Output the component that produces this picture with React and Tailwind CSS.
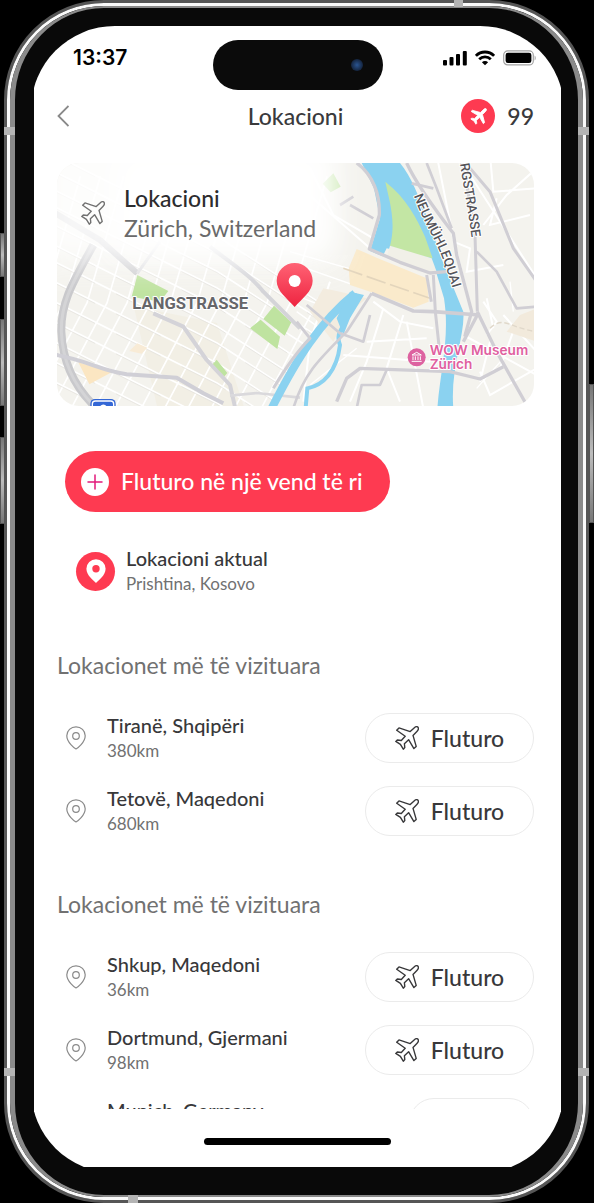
import { Plus } from 'lucide-react';

const visited = [
  { name: 'Tiranë, Shqipëri', distance: '380km' },
  { name: 'Tetovë, Maqedoni', distance: '680km' },
];

const nearby = [
  { name: 'Shkup, Maqedoni', distance: '36km' },
  { name: 'Dortmund, Gjermani', distance: '98km' },
  { name: 'Munich, Germany', compact: true },
];

function PlaneIcon({ className }) {
  return (
    <svg className={className} viewBox="0 0 24 24" fill="none" stroke="currentColor" strokeWidth="1.4" strokeLinejoin="round" aria-hidden="true">
      <path d="M22.9 1.1c-1-.8-2.7-.2-3.8.8L15.2 5.600 4 1.900 1.700 4.300l8.500 6-3.900 4.200-4-.5L.8 15.400l4.600 2.900 2.900 4.900 1.500-1.600-.4-3.900 4.200-4 5.300 8.900 2.300-2.200L18 9.400l3.900-3.900c1.100-1.100 1.900-3.200 1-4.400z" />
    </svg>
  );
}

function PlaneSolidIcon({ className }) {
  return (
    <svg className={className} viewBox="0 0 24 24" fill="currentColor" stroke="currentColor" strokeWidth="1.2" strokeLinejoin="round" aria-hidden="true">
      <path d="M22.800 1.200c-.9-.8-2.300-.4-3.300.6L14.800 6.400 3.200 3.200 1.600 4.800l9.300 5.600-4.500 4.600-4-.7L1.100 15.600l4.500 2.700 2.700 4.600 1.300-1.300-.6-4 4.600-4.500 5.300 9.100 1.700-1.600-3-11.400 4.600-4.600c1-1 1.500-2.500.6-3.400z" />
    </svg>
  );
}

function PinIcon({ className }) {
  return (
    <svg className={className} viewBox="0 0 20 24" fill="none" stroke="currentColor" strokeWidth="1.2" strokeLinejoin="round" aria-hidden="true">
      <path d="M10 23C8.600 22.300.8 16.500.8 9.800a9.200 9 0 0 1 18.400 0C19.200 16.500 11.400 22.300 10 23z" />
      <circle cx="10" cy="10" r="3.300" />
    </svg>
  );
}

function StatusIcons() {
  return (
    <div className="flex items-center gap-2">
      <svg className="h-4 w-6" viewBox="0 0 24 16" aria-hidden="true">
        <rect x="0" y="10" width="4" height="5.500" rx="1" />
        <rect x="6.500" y="7" width="4" height="8.500" rx="1" />
        <rect x="13" y="4" width="4" height="11.500" rx="1" />
        <rect x="19.800" y="1" width="4" height="14.500" rx="1" />
      </svg>
      <svg className="h-4 w-5" viewBox="0 0 20 16" fill="none" stroke="#000" strokeWidth="2.800" aria-hidden="true">
        <path d="M.9 5.800a12.800 12.800 0 0 1 18.200 0" />
        <path d="M4.200 9.300a8.200 8.200 0 0 1 11.600 0" />
        <path d="M6.900 12.200a4.400 4.400 0 0 1 6.200 0L10 15.300z" fill="#000" stroke="none" />
      </svg>
      <svg className="h-4 w-[33px]" viewBox="0 0 33 16" aria-hidden="true">
        <rect x=".7" y=".9" width="29.600" height="14" rx="4" fill="none" stroke="#a3a3a3" strokeWidth="1.200" />
        <rect x="2.600" y="2.800" width="25.800" height="10.200" rx="2.300" />
        <path d="M31.600 5.500c1.500.7 1.500 4.200 0 4.900z" fill="#a3a3a3" />
      </svg>
    </div>
  );
}

const westGridA = [60, 110, 165, 215, 270, 330, 380, 440, 500, 560, 620, 680, 740, 800];
const westGridB = [-60, 0, 70, 130, 190, 260, 320, 400, 470, 540, 610, 680, 760, 830, 900];

function CityMap() {
  return (
    <svg className="block h-full w-full" viewBox="0 0 1431 729" preserveAspectRatio="xMidYMid slice" role="img" aria-label="Zürich">
      <defs>
        <linearGradient id="pinFill" x1="0" y1="0" x2="0" y2="1">
          <stop offset="0" stopColor="#ff6274" />
          <stop offset="1" stopColor="#ee2440" />
        </linearGradient>
        <filter id="haze" x="-30%" y="-60%" width="160%" height="220%">
          <feGaussianBlur stdDeviation="48" />
        </filter>
        <clipPath id="west">
          <path d="M0 0H900L760 330 800 460 640 729H0z" />
        </clipPath>
      </defs>
      <rect width="1431" height="729" fill="#f4f3ee" />

      {/* west side: blocks, side streets, parks */}
      <g clipPath="url(#west)">
        <path d="M230 430 480 480 560 729H300z" fill="#f2efe5" />
        <g fill="none" stroke="#fff" strokeWidth="5">
          {westGridA.map((y) => (
            <path key={y} d={`M-20 ${y - 90}L480 ${y + 160} 960 ${y + 470}`} />
          ))}
          {westGridB.map((x) => (
            <path key={x} d={`M${x + 130} 40L${x + 20} 420 ${x - 160} 760`} />
          ))}
        </g>
        <g fill="none" stroke="#e3e1dd" strokeWidth="2">
          {westGridA.map((y) => (
            <path key={y} d={`M-20 ${y - 86}L480 ${y + 164} 960 ${y + 474}`} strokeDasharray="150 70" />
          ))}
        </g>
      </g>
      <g transform="translate(-21 -24)">
        <path d="M262 360 355 408 330 440 245 425z" fill="#bfe3a0" />
        <path d="M672 452 724 502 704 542 640 492zM632 494 690 545 682 582 600 520z" fill="#bfe3a0" />
        <path d="M500 614 532 654 518 670 484 632z" fill="#bfe3a0" />
        <path d="M85 622 185 652 118 688z" fill="#fbe6c2" />
        <path d="M262 565 292 578 275 596 238 588z" fill="#f8ebd6" />
        <g fill="none" strokeLinejoin="round">
          <path d="M130 270C70 380 32 440 34 530 38 630 80 700 130 750" stroke="#c9c9cc" strokeWidth="24" />
          <path d="M130 270C70 380 32 440 34 530 38 630 80 700 130 750" stroke="#d4d4d6" strokeWidth="9" />
          <path d="M0 165 150 255 262 355" stroke="#cdcdd0" strokeWidth="18" />
          <path d="M480 275C550 330 600 360 640 410L750 520" stroke="#d4d4d8" strokeWidth="12" />
          <path d="M310 475 400 515 470 615 540 690 556 760" stroke="#d4d3d8" strokeWidth="12" />
          <path d="M20 600C120 620 150 645 230 658L380 668 460 715 520 745" stroke="#d0cfd6" strokeWidth="12" />
          <path d="M540 722 620 714 750 728" stroke="#dad9dc" strokeWidth="8" />
          <path d="M330 260 262 355" stroke="#dedee0" strokeWidth="9" />
        </g>
      </g>

      {/* east side: river, canal, station and main roads */}
      <g transform="translate(699 -24)">
        <g fill="none" stroke="#fff" strokeWidth="6">
          <path d="M0 70 240 280M60 40 130 180 250 250M440 0 490 250 545 470M600 0 610 110 740 100M540 60 740 370M580 210 650 120 740 40M620 130 600 210 720 180" />
          <path d="M120 380 60 560 40 740M250 440 330 500 430 520M230 560 410 550M280 460 230 620 180 740M340 480 290 640 330 740M160 600 420 620M350 500 400 760M520 540 740 660M570 650 600 720 740 640M490 260 540 280 530 350 640 330M590 430 610 520M600 560 570 680 M680 500 630 640M580 440 620 500 590 540M640 480 740 590" />
          <path d="M20 330 220 400M0 290 210 350M40 430 140 470M20 470 90 520M60 690 200 580M660 380 670 470M560 700 640 610" strokeWidth="4" />
        </g>
        <path d="M150 410 230 430 170 480 130 560 60 470 100 400z" fill="#f3ecdf" />
        <path d="M690 480 740 460V560L650 530z" fill="#f2eadc" />
        <path d="M130 55 152 95 122 112 98 86z" fill="#bfe3a0" />
        <path d="M215 24H330C365 65 385 125 420 205L450 300 520 470C526 540 480 640 490 760H442C452 640 480 545 462 430L438 350 420 310 290 280 278 304 240 288 270 190 252 100z" fill="#8bd2f0" />
        <path d="M286 80C350 130 380 190 405 245L428 310C380 300 330 285 300 272 320 200 296 130 286 80z" fill="#c3e6a4" />
        <path d="M300 272 425 310 440 350 385 350 290 304z" fill="#f1f0e8" />
        <path d="M200 282 260 308 410 370 416 440 370 458 245 412 180 390 176 340z" fill="#faeacb" />
        <path d="M160 340 420 430" stroke="#e3d5bc" strokeWidth="5" strokeDasharray="60 14" />
        <path d="M195 415C90 500 20 610-60 770" stroke="#8bd2f0" strokeWidth="24" fill="none" />
        <path d="M195 415C180 520 130 520 150 570 140 650 100 690 52 700L46 770" stroke="#8bd2f0" strokeWidth="12" fill="none" />
        <path d="M180 410 222 420 180 490 160 540 140 490z" fill="#8bd2f0" />
        <g fill="none" stroke="#d0ced4" strokeWidth="11" strokeLinejoin="round">
          <path d="M200 24C250 60 270 120 268 180L238 282 330 322 420 354 470 350" strokeWidth="10" />
          <path d="M350 24C380 90 440 170 490 235L500 300 545 470 524 545" strokeWidth="10" />
          <path d="M410 24 440 100 485 220" strokeWidth="8" />
          <path d="M365 85 430 100" strokeWidth="8" />
          <path d="M245 415 370 468 430 470 570 480" />
          <path d="M430 360 436 470 450 600M410 360 424 440" strokeWidth="9" />
          <path d="M520 24 555 240 562 470" strokeWidth="9" />
          <path d="M540 40 600 110 670 280 740 380" strokeWidth="9" />
          <path d="M560 290 620 350 680 460 740 455" strokeWidth="8" />
          <path d="M562 470 620 590 710 750M562 480 520 560" strokeWidth="10" />
          <path d="M50 450 150 535 220 560 240 480" strokeWidth="8" />
          <path d="M245 415 170 530C80 620 40 660 10 760" strokeWidth="8" />
          <path d="M20 500 60 550C20 590-20 650-50 700" strokeWidth="9" />
          <path d="M140 740 170 670 210 640 480 650 570 672 640 635" strokeWidth="10" />
          <path d="M200 760 215 690 270 690 290 645" strokeWidth="8" />
          <path d="M180 150 250 190M150 150 190 125" strokeWidth="8" />
        </g>
        <path d="M600 520C640 480 660 520 740 530" fill="none" stroke="#e0d8ca" strokeWidth="4" strokeDasharray="16 8" />
      </g>

      {/* fade that keeps the card caption readable */}
      <rect x="-60" y="-90" width="900" height="385" fill="#fff" opacity=".82" filter="url(#haze)" />
      <rect x="170" y="-40" width="640" height="310" fill="#fff" opacity=".9" filter="url(#haze)" />

      <g fontWeight="700" stroke="#fff" strokeWidth="6" strokeLinejoin="round" paintOrder="stroke">
        <text x="226" y="438" fontSize="50" fill="#66666a" fontFamily="Roboto, sans-serif">
          LANGSTRASSE
        </text>
        <g fontFamily="Roboto, sans-serif" fill="#55555a" fontSize="40" fontWeight="500">
          <path id="quayLine" d="M1070 98C1095 170 1130 220 1150 270S1180 350 1205 440" fill="none" stroke="none" />
          <text>
            <textPath href="#quayLine">NEUMÜHLEQUAI</textPath>
          </text>
          <path id="bergLine" d="M1206-20C1218 70 1236 150 1254 300" fill="none" stroke="none" />
          <text>
            <textPath href="#bergLine">ERGSTRASSE</textPath>
          </text>
        </g>
        <g fontFamily="Inter, sans-serif" fill="#e0609f" fontSize="41" fontWeight="600">
          <text x="1118" y="577">WOW Museum</text>
          <text x="1118" y="619">Zürich</text>
        </g>
      </g>
      <g transform="translate(1079 583)">
        <circle r="27" fill="#dd62a0" />
        <path d="M-14-7 0-15 14-7zM-11-3V8M-4-3V8M4-3V8M11-3V8M-15 12H15" fill="none" stroke="#fff" strokeWidth="3" />
      </g>
      <g>
        <rect x="100" y="708" width="76" height="60" rx="14" fill="#3467d6" />
        <rect x="106" y="714" width="64" height="50" rx="9" fill="none" stroke="#fff" strokeWidth="4" />
        <path d="M130 729a10 8 0 0 1 18 0z" fill="#fff" />
      </g>
      <g>
        <path d="M713 432C690 405 659 385 659 353a54 53 0 0 1 108 0C767 385 736 405 713 432z" fill="url(#pinFill)" />
        <circle cx="713" cy="354" r="18" fill="#fff" />
      </g>
    </svg>
  );
}

function LocationRow({ place }) {
  return (
    <li className="flex h-[50px] items-center">
      <PinIcon className="ml-[9px] h-6 w-5 shrink-0 text-[#8a8a8a]" />
      <div className="ml-[21px] h-[52px] min-w-0 flex-1">
        <p className="text-xl leading-[26px] font-medium text-[#38383a]">{place.name}</p>
        {place.distance && <p className="text-[17px] leading-[26px] text-[#717171]">{place.distance}</p>}
      </div>
      {place.compact ? (
        <button type="button" aria-label="Fluturo" className="h-[50px] w-[125px] shrink-0 rounded-full border border-[#ebebeb] bg-white" />
      ) : (
        <button
          type="button"
          className="flex h-[50px] w-[169px] shrink-0 items-center justify-center gap-3 rounded-full border border-[#ebebeb] bg-white text-[23px] font-medium text-[#38383a]"
        >
          <PlaneIcon className="h-6 w-6" />
          Fluturo
        </button>
      )}
    </li>
  );
}

function LocationSection({ title, places }) {
  return (
    <section>
      <h2 className="text-[23px] leading-7 text-[#717171]">{title}</h2>
      <ul className="mt-[34px] flex flex-col gap-[23px]">
        {places.map((place) => (
          <LocationRow key={place.name} place={place} />
        ))}
      </ul>
    </section>
  );
}

const sideButton = 'absolute bg-linear-to-b from-[#777] via-[#bdbdbd] to-[#777] border border-[#555]';
const antenna = 'absolute bg-[#b4b4b4]';

function PhoneFrame({ children }) {
  return (
    <div className="relative h-screen overflow-hidden bg-black pr-[5px] pl-1">
      <span className={`${sideButton} top-[233px] left-0 h-11 w-[5px]`} />
      <span className={`${sideButton} top-[319px] left-0 h-[87px] w-[5px]`} />
      <span className={`${sideButton} top-[437px] left-0 h-[87px] w-[5px]`} />
      <span className={`${sideButton} top-[384px] right-0 h-[139px] w-[5px]`} />
      <div className="h-full rounded-[100px] border-[3px] border-[#565656]">
        <div className="h-full rounded-[97px] border-[3px] border-[#fafafa]">
          <div className="h-full rounded-[94px] border-x-[5px] border-y-2 border-[#8a8a8a] bg-[#090909] pt-[18px] pr-[17px] pb-7 pl-[19px]">
            <div className="h-full overflow-hidden">
              {/* the glass is a little larger than the visible area */}
              <div className="-mx-[3px] -mb-1.5 h-[calc(100%+6px)] overflow-hidden rounded-[84px] bg-white px-[3px]">
                {children}
              </div>
            </div>
          </div>
        </div>
      </div>
      <span className={`${antenna} top-[127px] left-1 h-2 w-[11px]`} />
      <span className={`${antenna} top-[127px] right-[5px] h-2 w-[11px]`} />
      <span className={`${antenna} bottom-[127px] left-1 h-2 w-[11px]`} />
      <span className={`${antenna} right-[5px] bottom-[127px] h-2 w-[11px]`} />
      <span className={`${antenna} top-0 right-[131px] h-[7px] w-[9px]`} />
      <span className={`${antenna} bottom-0 left-32 h-2 w-[10px]`} />
    </div>
  );
}

export default function App() {
  return (
    <PhoneFrame>
      <div className="flex h-full flex-col font-['Lato',sans-serif]">
        <div className="grid h-16 shrink-0 grid-cols-[1fr_170px_1fr] items-center">
          <span className="pl-[39px] font-['Inter',sans-serif] text-[21px] font-semibold text-black">13:37</span>
          <div className="flex h-[50px] items-center justify-end self-end rounded-full bg-[#0b0b0b] pr-5">
            <span className="h-3 w-3 rounded-full bg-radial from-[#2a5592] to-[#0b1220]" />
          </div>
          <div className="flex justify-end pr-[25px]">
            <StatusIcons />
          </div>
        </div>

        <header className="grid h-[52px] shrink-0 grid-cols-[1fr_auto_1fr] items-center pr-[27px] pl-[23px] text-[23px] font-medium text-[#3a3a3c]">
          <button type="button" aria-label="Kthehu" className="w-fit text-[#8a8a8a]">
            <svg className="h-[22px] w-3" viewBox="0 0 12 22" fill="none" stroke="currentColor" strokeWidth="1.800" aria-hidden="true">
              <path d="M11.500 1 1.500 11l10 10" />
            </svg>
          </button>
          <h1>Lokacioni</h1>
          <div className="flex items-center justify-end gap-3">
            <span className="flex h-[34px] w-[34px] items-center justify-center rounded-full bg-[#fe3a51] text-white">
              <PlaneSolidIcon className="h-[17px] w-[17px]" />
            </span>
            99
          </div>
        </header>

        <main className="mt-[21px] min-h-0 flex-1 overflow-hidden pr-[27px] pl-[23px]">
          <div className="relative h-[243px] overflow-hidden rounded-[22px]">
            <CityMap />
            <div className="absolute top-5 left-6 flex items-center gap-[19px] text-[23px] leading-[30px]">
              <PlaneIcon className="h-6 w-6 text-[#717171]" />
              <div>
                <p className="font-medium text-[#2c2c2e]">Lokacioni</p>
                <p className="text-[#6a6a6a]">Zürich, Switzerland</p>
              </div>
            </div>
          </div>

          <button
            type="button"
            className="mt-[45px] ml-2 flex h-[61px] items-center gap-3 rounded-full bg-[#fe3a51] pr-[27px] pl-4 text-[23px] font-medium text-white"
          >
            <span className="flex h-7 w-7 items-center justify-center rounded-full bg-white text-[#e2197a]">
              <Plus className="h-6 w-6" strokeWidth={1.5} />
            </span>
            Fluturo në një vend të ri
          </button>

          <div className="mt-[33px] mb-[54px] ml-[19px] flex items-center gap-[11px]">
            <span className="flex h-[39px] w-[39px] items-center justify-center rounded-full bg-[#fe3a51]">
              <svg className="h-6 w-5" viewBox="0 0 20 24" aria-hidden="true">
                <path d="M10 24C8 22 .4 16.500.4 9.800a9.600 9.600 0 0 1 19.200 0C19.600 16.500 12 22 10 24z" fill="#fff" />
                <circle cx="10" cy="9.800" r="3.700" fill="#fe3a51" />
              </svg>
            </span>
            <div>
              <p className="text-xl leading-[26px] font-medium text-[#38383a]">Lokacioni aktual</p>
              <p className="text-[17px] leading-[26px] text-[#717171]">Prishtina, Kosovo</p>
            </div>
          </div>

          <div className="flex flex-col gap-[54px]">
            <LocationSection title="Lokacionet më të vizituara" places={visited} />
            <LocationSection title="Lokacionet më të vizituara" places={nearby} />
          </div>
        </main>

        <footer className="flex h-16 shrink-0 justify-center">
          <span className="mt-[29px] h-[7px] w-[187px] rounded-full bg-black" />
        </footer>
      </div>
    </PhoneFrame>
  );
}
